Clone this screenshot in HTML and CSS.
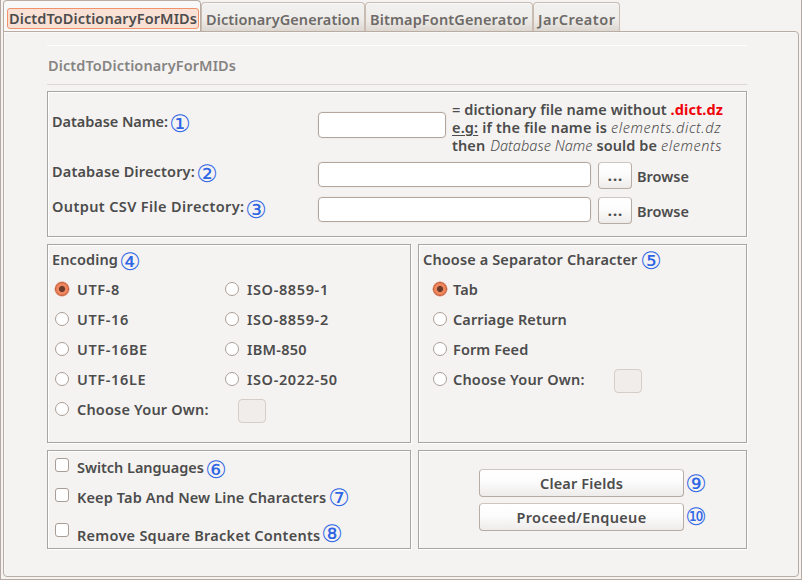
FILE: index.html
```html
<!DOCTYPE html>
<html lang="en">
<head>
<meta charset="utf-8">
<title>DictdToDictionaryForMIDs</title>
<link rel="stylesheet" href="styles.css">
</head>
<body>
<div class="window">
  <nav class="tabs">
    <div class="tab tab-active"><span class="focus">DictdToDictionaryForMIDs</span></div>
    <div class="tab tab-dg"><span>DictionaryGeneration</span></div>
    <div class="tab tab-bf"><span>BitmapFontGenerator</span></div>
    <div class="tab tab-jar"><span>JarCreator</span></div>
  </nav>
  <main class="page">
    <h1 class="title"><span>DictdToDictionaryForMIDs</span></h1>
    <section class="box paths">
      <div class="row row-name">
        <div class="label l-name"><span>Database Name:</span><i class="num">①</i></div>
        <div class="field field-short"></div>
        <p class="help">
          <span class="help-1">= dictionary file name without <b class="red">.dict.dz</b></span>
          <span class="help-2"><u>e.g:</u> if the file name is <em>elements.dict.dz</em></span>
          <span class="help-3">then <em class="db">Database Name</em> sould be <em>elements</em></span>
        </p>
      </div>
      <div class="row">
        <div class="label l-dir"><span>Database Directory:</span><i class="num">②</i></div>
        <div class="field"></div><div class="button dots">...</div><span class="browse">Browse</span>
      </div>
      <div class="row">
        <div class="label l-out"><span>Output CSV File Directory:</span><i class="num">③</i></div>
        <div class="field"></div><div class="button dots">...</div><span class="browse">Browse</span>
      </div>
    </section>
    <div class="pair">
      <section class="box encoding">
        <div class="label l-enc"><span>Encoding</span><i class="num">④</i></div>
        <div class="options">
          <div class="option code"><i class="radio on"></i><span>UTF-8</span></div>
          <div class="option code"><i class="radio"></i><span>ISO-8859-1</span></div>
          <div class="option code"><i class="radio"></i><span>UTF-16</span></div>
          <div class="option code"><i class="radio"></i><span>ISO-8859-2</span></div>
          <div class="option code"><i class="radio"></i><span>UTF-16BE</span></div>
          <div class="option code ibm"><i class="radio"></i><span>IBM-850</span></div>
          <div class="option code"><i class="radio"></i><span>UTF-16LE</span></div>
          <div class="option code"><i class="radio"></i><span>ISO-2022-50</span></div>
          <div class="option"><i class="radio"></i><span class="t-own">Choose Your Own:</span></div>
          <div class="option"><div class="own own-enc"></div></div>
        </div>
      </section>
      <section class="box separator">
        <div class="label l-sep"><span>Choose a Separator Character</span><i class="num">⑤</i></div>
        <div class="options">
          <div class="option"><i class="radio on"></i><span>Tab</span></div>
          <div class="option"><i class="radio"></i><span>Carriage Return</span></div>
          <div class="option"><i class="radio"></i><span>Form Feed</span></div>
          <div class="option"><i class="radio"></i><span class="t-own">Choose Your Own:</span><div class="own own-sep"></div></div>
        </div>
      </section>
    </div>
    <div class="pair pair-last">
      <section class="box checks">
        <div class="option c-switch"><i class="check"></i><span>Switch Languages</span><i class="num">⑥</i></div>
        <div class="option c-keep"><i class="check"></i><span>Keep Tab And New Line Characters</span><i class="num">⑦</i></div>
        <div class="option c-remove"><i class="check"></i><span>Remove Square Bracket Contents</span><i class="num">⑧</i></div>
      </section>
      <section class="box actions">
        <div class="action"><div class="button wide t-clear">Clear Fields</div><i class="num">⑨</i></div>
        <div class="action"><div class="button wide t-proceed">Proceed/Enqueue</div><i class="num num-ten">⑩</i></div>
      </section>
    </div>
  </main>
</div>
</body>
</html>
```
FILE: styles.css
```css
* { box-sizing: border-box; }
body {
  margin: 0;
  background: #f5f3f2;
  color: #4c4c4c;
  font: 650 14.5px/20px "Noto Sans", "Open Sans", sans-serif;
  white-space: nowrap;
}
.window {
  display: flex;
  flex-direction: column;
  width: 802px;
  height: 580px;
  padding: 0 2px 2px;
  border: solid #b5a9a1;
  border-width: 0 1px 1px;
  overflow: hidden;
}
.tabs { display: flex; align-items: flex-end; height: 32px; margin-bottom: -1px; }
.tab {
  height: 30px;
  padding: 6px 0 0 4px;
  border: 1px solid #c8bcb3;
  border-bottom-color: #b9ada3;
  border-radius: 4px 4px 0 0;
  background: linear-gradient(#f3f1ef, #efedea 55%, #ddd7d1);
  box-shadow: inset 0 1px #faf9f9;
  color: #6d6a68;
}
.tab-active {
  width: 198px;
  height: 32px;
  padding: 7px 0 0 3px;
  border-color: #b9ada3;
  border-bottom: 0;
  background: #f9f8f8;
  color: #4c4c4c;
  letter-spacing: .1px;
}
.tab-dg { width: 164px; letter-spacing: .08px; }
.tab-bf { width: 168px; letter-spacing: .14px; }
.tab-jar { width: 87px; letter-spacing: .48px; }
.focus {
  display: block;
  width: 192px;
  height: 21px;
  padding-left: 1px;
  line-height: 18px;
  border: 1px solid #f1926b;
  border-radius: 3px;
  background: #f9e1d6;
}
.page {
  flex: 1;
  padding: 13px 0 0 43px;
  border: 1px solid #b9ada3;
  border-radius: 0 4px 4px 4px;
  box-shadow: inset 1px 1px #faf9f9;
}
.title {
  width: 700px;
  height: 40px;
  margin: 0 0 6px;
  padding: 9px 0 0 1px;
  border-top: 1px solid #fff;
  border-bottom: 1px solid #ddd8d2;
  color: #868482;
  font: inherit;
  letter-spacing: .1px;
}
.box {
  border: 1px solid #a5a5a2;
  box-shadow: 1px 1px #fff, inset 1px 1px #fff;
}
.label { display: flex; padding-left: 4px; }
.num {
  width: 20px;
  height: 20px;
  color: #2f66e5;
  font: 400 24px/22px "DejaVu Sans", sans-serif;
  letter-spacing: 0;
  display: flex;
  justify-content: center;
}
.label .num { margin-top: 2px; }
.paths { width: 700px; height: 146px; }
.row { display: flex; height: 35px; }
.row .label { width: 270px; padding-top: 2px; }
.row-name { height: 67px; }
.row-name .label { padding-top: 19px; }
.l-name > span { width: 118px; letter-spacing: -.06px; }
.l-dir > span { width: 145px; letter-spacing: .15px; }
.l-out > span { width: 194px; letter-spacing: .38px; }
.l-enc > span { width: 68px; letter-spacing: .12px; }
.l-sep > span { width: 218px; letter-spacing: .13px; }
.l-out .num { margin-top: 3px; }
.l-sep .num { margin-top: 1px; }
.field {
  width: 273px;
  height: 25px;
  margin-top: 3px;
  border: 1px solid #b3a79d;
  border-radius: 4px;
  background: #fff;
  box-shadow: 0 0 0 1px #efedeb;
}
.field-short { width: 128px; height: 26px; margin-top: 20px; }
.help { margin: 8px 0 0 6px; line-height: 18px; }
.help > span { display: block; height: 18px; }
.help-1 { letter-spacing: .08px; }
.help-2 { letter-spacing: .17px; }
.help-3 { letter-spacing: .1px; }
em { font-weight: 300; letter-spacing: .58px; }
em.db { letter-spacing: .04px; margin-left: 1px; }
.red { color: #f00008; font-weight: 700; }
u { text-decoration-thickness: 1px; text-underline-offset: 2px; }
.button {
  display: flex;
  justify-content: center;
  align-items: center;
  border: 1px solid #b7aca3;
  border-top-color: #cdc6c0;
  border-radius: 4px;
  background: linear-gradient(#fff, #fcfcfc 45%, #eeecea);
}
.dots {
  width: 34px;
  height: 27px;
  margin: 3px 5px 0 7px;
  padding: 0 0 2px 1px;
  font-weight: 800;
  letter-spacing: 1px;
}
.browse { padding-top: 7px; }
.pair { display: flex; gap: 7px; width: 700px; height: 199px; margin-top: 7px; }
.pair-last { height: 99px; }
.encoding, .checks { width: 364px; }
.separator, .actions { width: 329px; }
.encoding .label, .separator .label { height: 30px; padding-top: 4px; }
.options { display: grid; }
.encoding .options { grid-template-columns: 170px 1fr; }
.option { display: flex; height: 30px; padding-left: 7px; }
.option > span { padding-top: 4px; letter-spacing: .08px; }
.option.code > span { letter-spacing: .63px; }
.option.ibm > span { letter-spacing: .28px; }
.option > .t-own { width: 132px; letter-spacing: .18px; }
.separator .option { padding-left: 14px; }
.radio {
  width: 14px;
  height: 14px;
  margin: 7px 8px 0 0;
  border: 1px solid #a99e95;
  border-radius: 50%;
  background: #fff;
}
.separator .radio { margin-right: 6px; }
.radio.on {
  border-color: #c4552d;
  background: radial-gradient(#6c3a28 0 2.6px, #f18a62 3.6px, #e9784d);
  box-shadow: 0 0 0 .5px #d88a6c;
}
.own {
  width: 28px;
  height: 24px;
  border: 1px solid #d5cec8;
  border-radius: 4px;
  background: #f0edeb;
}
.own-enc { margin: 4px 0 0 13px; }
.own-sep { margin: 4px 0 0 29px; }
.check {
  width: 14px;
  height: 14px;
  margin: 7px 8px 0 0;
  border: 1px solid #a99e95;
  border-radius: 3px;
  background: #fff;
}
.option.c-switch > span { width: 129px; padding-top: 6px; letter-spacing: -.04px; }
.option.c-keep > span { width: 252px; padding-top: 6px; letter-spacing: .13px; }
.c-switch .num { margin-top: 8px; }
.c-keep .num { margin-top: 6px; }
.c-remove { padding-top: 5px; }
.option.c-remove > span { width: 245px; padding-top: 9px; letter-spacing: .26px; }
.c-remove .num { margin-top: 7px; }
.actions { padding: 18px 0 0 60px; }
.action { display: flex; height: 34px; }
.wide { width: 205px; height: 28px; }
.t-clear { letter-spacing: .15px; }
.t-proceed { letter-spacing: .34px; }
.action .num { margin: 4px 0 0 2px; }
.action .num-ten { margin-top: 3px; }
```
